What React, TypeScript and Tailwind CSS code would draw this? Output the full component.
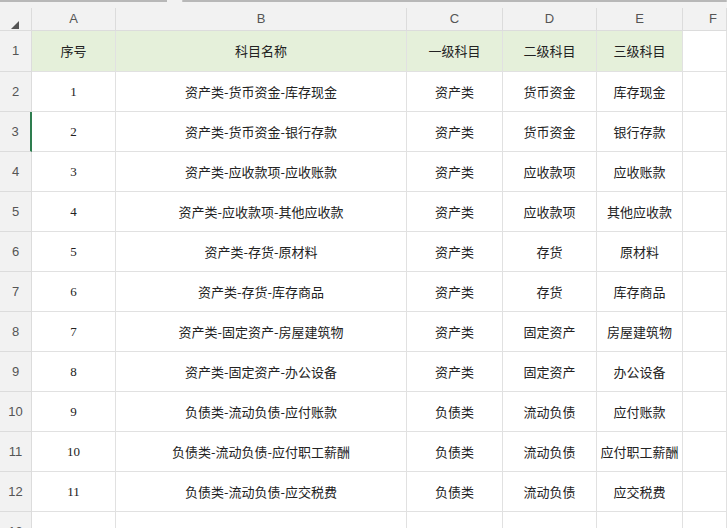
import React from "react";

const rows: [string, string, string, string, string][] = [
  ["1", "资产类-货币资金-库存现金", "资产类", "货币资金", "库存现金"],
  ["2", "资产类-货币资金-银行存款", "资产类", "货币资金", "银行存款"],
  ["3", "资产类-应收款项-应收账款", "资产类", "应收款项", "应收账款"],
  ["4", "资产类-应收款项-其他应收款", "资产类", "应收款项", "其他应收款"],
  ["5", "资产类-存货-原材料", "资产类", "存货", "原材料"],
  ["6", "资产类-存货-库存商品", "资产类", "存货", "库存商品"],
  ["7", "资产类-固定资产-房屋建筑物", "资产类", "固定资产", "房屋建筑物"],
  ["8", "资产类-固定资产-办公设备", "资产类", "固定资产", "办公设备"],
  ["9", "负债类-流动负债-应付账款", "负债类", "流动负债", "应付账款"],
  ["10", "负债类-流动负债-应付职工薪酬", "负债类", "流动负债", "应付职工薪酬"],
  ["11", "负债类-流动负债-应交税费", "负债类", "流动负债", "应交税费"],
];

const cols = "grid grid-cols-[32px_84px_291px_96px_94px_86px_1fr]";
const cell = "border-r border-b border-[#e1e1e1] flex items-center justify-center text-[13px] text-[#222] whitespace-nowrap overflow-hidden";
const rh = "border-r border-b border-[#dcdcdc] bg-[#f2f2f2] flex items-center justify-center text-[13px] text-[#555]";
const cjk = { fontFamily: '"Noto Sans CJK SC", sans-serif' };
const num = { fontFamily: '"Liberation Serif", serif' };

export default function App() {
  return (
    <div className="w-[727px] h-[528px] overflow-hidden bg-white" style={{ fontFamily: '"Liberation Sans", Arial, sans-serif' }}>
      <div className="h-[8px] bg-[#f2f2f2] flex items-start gap-[15px]">
        <div className="w-[167px] h-[2px] bg-[#b8b8b8]"></div>
        <div className="w-[545px] h-[2px] bg-[#b8b8b8] rounded"></div>
      </div>
      <div className={`${cols} h-[23px] bg-[#f2f2f2]`}>
        <div className={rh + " relative"}>
          <svg width="8" height="8" className="absolute left-[11px] top-[13px]"><polygon points="8,0 8,8 0,8" fill="#555" /></svg>
        </div>
        {["A", "B", "C", "D", "E", "F"].map((c) => (
          <div key={c} className={rh + " " + (c === "F" ? "justify-start pl-[26px]" : "")}>{c}</div>
        ))}
      </div>
      <div className={`${cols} h-[41px]`}>
        <div className={rh}>1</div>
        {["序号", "科目名称", "一级科目", "二级科目", "三级科目"].map((t) => (
          <div key={t} className={cell + " bg-[#e5f0da]"} style={cjk}>{t}</div>
        ))}
        <div className={cell}></div>
      </div>
      {rows.map((r, i) => (
        <div key={i} className={`${cols} h-[40px]`}>
          <div className={rh + (i === 1 ? " bg-[#e3e3e3] text-[#2e7d4f] border-r-2 border-r-[#2e7d4f]" : "")}>{i + 2}</div>
          <div className={cell} style={num}>{r[0]}</div>
          <div className={cell} style={cjk}>{r[1]}</div>
          <div className={cell} style={cjk}>{r[2]}</div>
          <div className={cell} style={cjk}>{r[3]}</div>
          <div className={cell} style={cjk}>{r[4]}</div>
          <div className={cell}></div>
        </div>
      ))}
      <div className={`${cols} h-[40px]`}>
        <div className={rh}>13</div>
        {[0, 1, 2, 3, 4, 5].map((k) => <div key={k} className={cell}></div>)}
      </div>
    </div>
  );
}
